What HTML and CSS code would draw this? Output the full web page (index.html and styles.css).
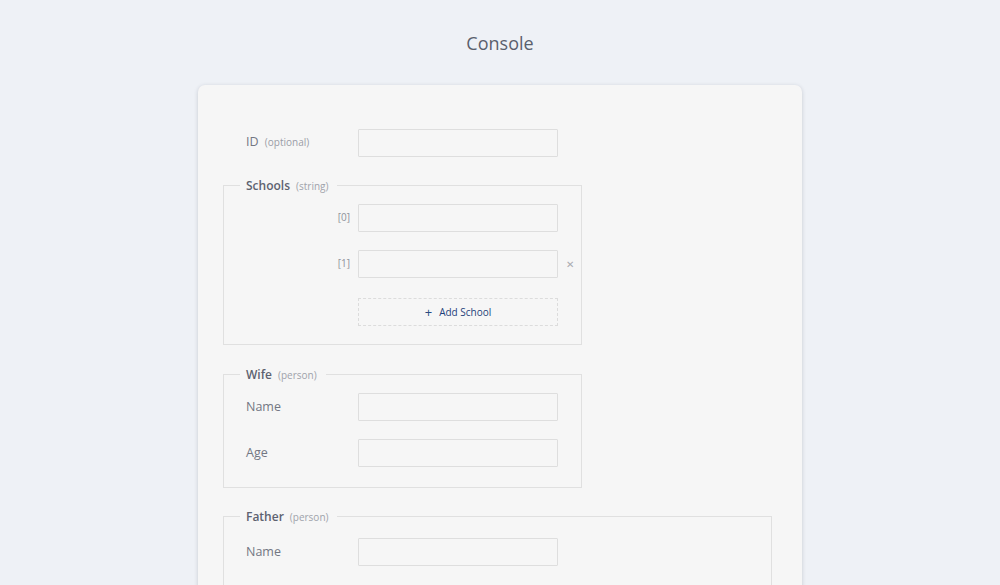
FILE: index.html
```html
<!DOCTYPE html>
<html lang="en">
<head>
<meta charset="utf-8">
<title>Console</title>
<link rel="stylesheet" href="styles.css">
</head>
<body>
<header class="page-header">
  <h1 class="page-title">Console</h1>
</header>
<main class="card">
  <div class="row row-top">
    <label class="field-label">ID <span class="hint">(optional)</span></label>
    <input class="text-input" type="text">
  </div>

  <fieldset class="group group-narrow group-schools">
    <legend class="group-legend"><span class="legend-name">Schools</span><span class="legend-type">(string)</span></legend>
    <div class="list">
      <div class="row">
        <label class="field-label index-label">[0]</label>
        <input class="text-input" type="text">
      </div>
      <div class="row">
        <label class="field-label index-label">[1]</label>
        <input class="text-input" type="text">
        <span class="remove">&#x2715;</span>
      </div>
      <div class="row row-add">
        <span class="field-label"></span>
        <button class="add-btn" type="button"><span class="plus">+</span>Add School</button>
      </div>
    </div>
  </fieldset>

  <fieldset class="group group-narrow group-wife">
    <legend class="group-legend"><span class="legend-name">Wife</span><span class="legend-type">(person)</span></legend>
    <div class="list">
      <div class="row">
        <label class="field-label">Name</label>
        <input class="text-input" type="text">
      </div>
      <div class="row">
        <label class="field-label">Age</label>
        <input class="text-input" type="text">
      </div>
    </div>
  </fieldset>

  <fieldset class="group group-wide">
    <legend class="group-legend"><span class="legend-name">Father</span><span class="legend-type">(person)</span></legend>
    <div class="list list-loose">
      <div class="row">
        <label class="field-label">Name</label>
        <input class="text-input" type="text">
      </div>
    </div>
  </fieldset>
</main>
</body>
</html>
```

FILE: styles.css
```css
* { box-sizing: border-box; }

html, body {
  margin: 0;
  padding: 0;
  height: 100%;
  overflow: hidden;
}

body {
  background: #eef1f6;
  font-family: "Open Sans", "Noto Sans", sans-serif;
  color: #5b6070;
}

.page-header {
  height: 85px;
  display: flex;
  align-items: center;
  justify-content: center;
}

.page-title {
  margin: 0;
  font-size: 18px;
  font-weight: 400;
  color: #5a5f6d;
  line-height: 1;
}

.card {
  width: 604px;
  margin: 0 auto;
  min-height: 600px;
  background: #f6f6f6;
  border-radius: 7px 7px 0 0;
  box-shadow: 0 1px 4px rgba(40, 50, 70, 0.2);
  padding: 44px 31px 0 25px;
}

.row {
  display: flex;
  align-items: center;
  height: 28px;
  padding-left: 22px;
}

.row-top { padding-left: 23px; }

.field-label {
  width: 112px;
  flex: none;
  font-size: 12.5px;
  color: #737783;
  position: relative;
  top: -1px;
}

.row-top .field-label { top: -2px; }

.hint {
  font-size: 10px;
  color: #9a9da6;
  margin-left: 3px;
}

.index-label {
  text-align: right;
  padding-right: 8px;
  font-size: 10px;
  color: #8f929b;
}

.text-input {
  width: 200px;
  height: 28px;
  border: 1px solid #dedede;
  background: #f6f6f6;
  border-radius: 1px;
  padding: 0 8px;
  font: inherit;
  outline: none;
}

.remove {
  margin-left: 8px;
  font-size: 10px;
  color: #a9abb1;
  line-height: 1;
}

.group {
  margin: 19px 0 0 0;
  padding: 10px 0 19px 0;
  border: 1px solid #e0e0e0;
  min-width: 0;
}

.group-schools { padding-bottom: 18px; }

.group-wife {
  margin-top: 20px;
  padding-bottom: 20px;
}

.group-narrow { width: 359px; }
.group-wide { width: 549px; }

.group-legend {
  margin-left: 16px;
  padding: 0 9px 0 6px;
  line-height: 18px;
  height: 18px;
  position: relative;
  top: -1px;
}

.legend-name {
  font-size: 12px;
  font-weight: 600;
  color: #5d6270;
}

.legend-type {
  font-size: 10px;
  color: #a0a3ab;
  margin-left: 6px;
}

.list {
  display: flex;
  flex-direction: column;
  gap: 18px;
}

.list-loose { padding-top: 3px; }

.row-add { margin-top: 2px; }

.add-btn {
  width: 200px;
  height: 28px;
  border: 1px dashed #dcdcdc;
  background: transparent;
  font-family: inherit;
  font-size: 10px;
  color: #1e3f7a;
  display: flex;
  align-items: center;
  justify-content: center;
  gap: 7px;
  cursor: pointer;
  padding: 0;
}

.plus {
  font-size: 13px;
  line-height: 1;
  color: #2a4a80;
}
```
